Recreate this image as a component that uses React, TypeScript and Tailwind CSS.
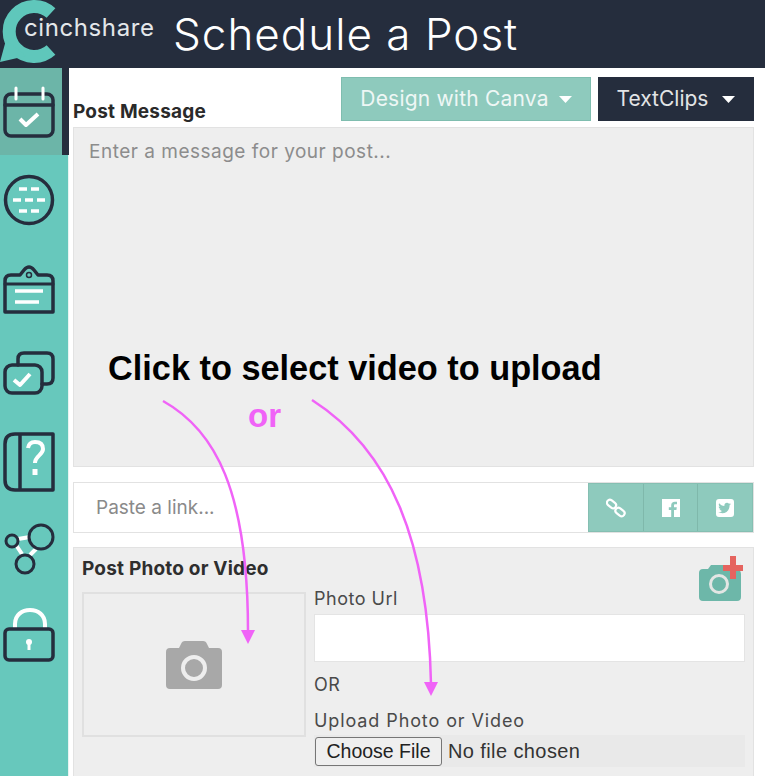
import React from 'react';

const DARK = '#252d3d';

const Caret = () => (
  <svg width="13" height="7" viewBox="0 0 13 7" className="shrink-0">
    <path d="M0 0h13L6.500 7z" fill="#fff" />
  </svg>
);

const Logo = () => (
  <div className="relative w-[167px] h-[68px] shrink-0">
    <svg width="60" height="64" viewBox="0 0 60 64" className="absolute left-0 top-0">
      <path d="M51 13A25 25 0 1 0 51 50" fill="none" stroke="#5fc7bb" strokeWidth="13" />
      <path d="M6 40L0 62l26-6z" fill="#5fc7bb" />
    </svg>
    <span className="absolute left-[24px] top-[13px] text-[24px] leading-[30px] tracking-[0.6px] text-[#e4e7ea] font-['Inter',sans-serif]">
      cinchshare
    </span>
  </div>
);

const icon = { fill: 'none', stroke: DARK, strokeWidth: 3, strokeLinecap: 'round' as const, strokeLinejoin: 'round' as const };
const white = { fill: 'none', stroke: '#fff', strokeWidth: 3, strokeLinecap: 'round' as const, strokeLinejoin: 'round' as const };

const CalendarIcon = () => (
  <svg width="52" height="52" viewBox="0 0 52 52">
    <rect x="2" y="8" width="48" height="42" rx="6" {...icon} strokeWidth={3.500} />
    <path d="M2 19h48" {...icon} strokeWidth={3.500} />
    <path d="M13 2v11M40 2v11" {...white} />
    <path d="M17 33l6 6 12-11" {...white} strokeWidth={4} strokeLinecap="butt" />
  </svg>
);

const ChatIcon = () => (
  <svg width="52" height="52" viewBox="0 0 52 52">
    <circle cx="26" cy="26" r="23.500" {...icon} strokeWidth={3.500} />
    <path d="M16 15h8M28 15h8M10 26h8M22 26h8M34 26h8M16 37h8M28 37h8" {...white} strokeLinecap="butt" strokeWidth={3.500} />
  </svg>
);

const ClipIcon = () => (
  <svg width="52" height="52" viewBox="0 2 52 52">
    <path d="M2 52V21q0-6 6-6h9l4-5q5-6 10 0l4 5h9q6 0 6 6v31z" {...icon} strokeWidth={3.500} />
    <path d="M2 24h48" {...icon} strokeWidth={3} />
    <circle cx="26" cy="15" r="2.500" {...icon} strokeWidth={1.500} />
    <path d="M12 31h28M12 42h24" {...white} strokeLinecap="butt" strokeWidth={3.500} />
  </svg>
);

const CopyIcon = () => (
  <svg width="52" height="44" viewBox="0 0 52 44">
    <path d="M15 14V8q0-6 6-6h23q6 0 6 6v19q0 6-6 6h-5" {...icon} strokeWidth={3.500} />
    <rect x="2" y="14" width="37" height="28" rx="7" {...icon} strokeWidth={3.500} />
    <path d="M11 29l6 5 10-11" {...white} strokeWidth={4} strokeLinecap="butt" />
  </svg>
);

const BookIcon = () => (
  <svg width="52" height="60" viewBox="0 0 52 60">
    <path d="M50 2H12Q2 2 2 12v36q0 10 10 10h38zM17 2v56" {...icon} strokeLinecap="butt" strokeWidth={3.500} />
    <path d="M25 16q1-6 7-6 8 0 8 7c0 6-8 7-8 14" {...white} strokeWidth={4} strokeLinecap="butt" />
    <path d="M32 37v6" {...white} strokeWidth={5} strokeLinecap="butt" />
  </svg>
);

const NodesIcon = () => (
  <svg width="52" height="52" viewBox="0 0 52 52">
    <path d="M15 16l12-2M13 22l6 9M33 26l-6 6" {...white} strokeWidth={4} strokeLinecap="butt" />
    <circle cx="9" cy="18" r="6" {...icon} />
    <circle cx="38" cy="14" r="12" {...icon} />
    <circle cx="22" cy="41" r="9" {...icon} />
  </svg>
);

const LockIcon = () => (
  <svg width="52" height="54" viewBox="0 0 52 54">
    <path d="M12 22V16C12 7 19 2 27 2s15 5 15 14v6" {...white} strokeWidth={4} strokeLinecap="butt" />
    <rect x="2" y="21" width="48" height="31" rx="4" {...icon} strokeWidth={3.500} />
    <path d="M26 35v7" {...white} strokeLinecap="butt" strokeWidth={3} />
    <circle cx="26" cy="34" r="3" fill="#fff" />
  </svg>
);

const LinkIcon = () => (
  <svg width="20" height="20" viewBox="0 0 20 20" fill="none" stroke="#fff" strokeWidth="2.200">
    <rect x="0.500" y="3" width="10" height="6" rx="3" transform="rotate(38 5.500 6)" />
    <rect x="9" y="11" width="10" height="6" rx="3" transform="rotate(38 14 14)" />
  </svg>
);

const FacebookIcon = () => (
  <svg width="18" height="18" viewBox="0 0 18 18">
    <path d="M0 0h18v18h-6v-7h2.400l.4-2.700H12V6.500c0-.8.300-1.300 1.400-1.300H15V2.800c-.4 0-1.200-.1-2.200-.1-2.200 0-3.600 1.300-3.600 3.600v2H6.800V11h2.400v7H0z" fill="#fff" />
  </svg>
);

const TwitterIcon = () => (
  <svg width="18" height="18" viewBox="0 0 18 18">
    <path
      fillRule="evenodd"
      d="M3 0h12a3 3 0 013 3v12a3 3 0 01-3 3H3a3 3 0 01-3-3V3a3 3 0 013-3zm12 5c-.5.200-1 .400-1.500.400.500-.300 1-.800 1.200-1.400-.5.300-1 .500-1.700.700a2.600 2.600 0 00-4.500 2.400c-2.200-.1-4.100-1.200-5.400-2.800-.7 1.200-.3 2.700.8 3.500-.4 0-.8-.1-1.200-.3 0 1.300.9 2.400 2.100 2.600-.4.100-.8.100-1.200 0 .3 1 1.300 1.800 2.500 1.800-1.200.9-2.600 1.300-3.900 1.200 4.800 2.900 11.500.2 11.400-6.900.5-.4 1-.8 1.400-1.300z"
      fill="#fff"
    />
  </svg>
);

const CameraPlus = () => (
  <svg width="46" height="46" viewBox="0 0 46 46" className="mr-[2px] mt-[-1px]">
    <path d="M2 18q0-4 4-4h5l3-4h14q2 0 3 2l2 2h5q6 0 6 5v23q0 4-4 4H6q-4 0-4-4z" fill="#6db7a9" />
    <circle cx="22" cy="29" r="8.500" fill="none" stroke="#e3e6e4" strokeWidth="3" />
    <path d="M26 10h7V1h6v9h7v6h-7v8h-6v-8h-7z" fill="#e5645f" />
  </svg>
);

const CameraGrey = () => (
  <svg width="56" height="48" viewBox="0 0 56 48">
    <path d="M0 11q0-4 4-4h9l2-4q1-3 4-3h18q3 0 4 3l2 4h9q4 0 4 4v33q0 4-4 4H4q-4 0-4-4z" fill="#a8a8a8" />
    <circle cx="28" cy="27" r="11" fill="#a8a8a8" stroke="#eee" strokeWidth="4" />
  </svg>
);

const NAV = [ChatIcon, ClipIcon, CopyIcon, BookIcon, NodesIcon, LockIcon];
const NAV_HEIGHTS = ['h-[90px]', 'h-[86px]', 'h-[84px]', 'h-[94px]', 'h-[80px]', 'h-[92px]'];

export default function App() {
  return (
    <div className="relative w-[768px] h-[776px] overflow-hidden bg-white font-['Inter',sans-serif] text-[#333]">
      <header className="h-[68px] bg-[#252d3d] flex items-center w-[765px]">
        <Logo />
        <h1 className="ml-[6px] text-[44px] leading-[50px] tracking-[1px] text-white font-light">
          Schedule a Post
        </h1>
      </header>

      <div className="flex h-[708px] w-[765px]">
        <nav className="w-[69px] shrink-0 bg-[#67c8bc] border-r border-[#e8f3f1]">
          <div className="h-[87px] flex items-center pl-[3px] bg-[#6cb5a8] border-r-[7px] border-[#252d3d] mr-[-1px]">
            <CalendarIcon />
          </div>
          {NAV.map((Icon, i) => (
            <div key={i} className={`${NAV_HEIGHTS[i]} flex items-center pl-[3px]`}>
              <Icon />
            </div>
          ))}
        </nav>

        <main className="flex-1 pl-[4px] pr-[11px]">
          <div className="h-[59px] flex items-start pt-[9px] gap-[7px]">
            <span className="mt-[23px] mr-auto text-[19px] leading-[24px] font-bold text-[#2a2a2a] tracking-[0.2px]">
              Post Message
            </span>
            <button className="w-[250px] h-[44px] flex items-center justify-center gap-[10px] bg-[#8ecabd] border border-[#7fbdaf] text-[#eef7f5] text-[21px] tracking-[0.2px]">
              Design with Canva <Caret />
            </button>
            <button className="w-[156px] h-[44px] flex items-center justify-center gap-[14px] bg-[#252d3d] text-[#e2e4e6] text-[21px]">
              TextClips <Caret />
            </button>
          </div>

          <div className="h-[340px] bg-[#eeeeee] border border-[#e2e2e2] px-[15px] pt-[11px] text-[19px] leading-[26px] tracking-[0.5px] text-[#8c8c8c]">
            Enter a message for your post...
          </div>

          <div className="mt-[15px] h-[51px] flex border border-[#e2e2e2] bg-white">
            <div className="flex-1 flex items-center pl-[22px] text-[19px] text-[#8a8a8a] pt-[1px]">Paste a link...</div>
            <div className="flex w-[165px] bg-[#8ecabd] border border-[#85bfb2]">
              <div className="flex-1 flex items-center justify-center border-r border-[#7fb8ab]">
                <LinkIcon />
              </div>
              <div className="flex-1 flex items-center justify-center border-r border-[#7fb8ab]">
                <FacebookIcon />
              </div>
              <div className="flex-1 flex items-center justify-center">
                <TwitterIcon />
              </div>
            </div>
          </div>

          <section className="mt-[14px] h-[240px] bg-[#eeeeee] border border-[#e2e2e2] pl-[8px] pr-[8px] pt-[8px]">
            <div className="flex justify-between h-[36px]">
              <span className="mt-[1px] text-[19px] leading-[24px] font-bold text-[#2e2e2e] tracking-[0.2px]">Post Photo or Video</span>
              <CameraPlus />
            </div>
            <div className="flex gap-[8px]">
              <div className="w-[224px] h-[145px] shrink-0 flex items-center justify-center border-2 border-[#e0e0e0]">
                <CameraGrey />
              </div>
              <div className="flex-1 text-[18px] text-[#4a4a4a] tracking-[0.5px]">
                <div className="h-[22px] leading-[14px]">Photo Url</div>
                <div className="h-[48px] bg-white border border-[#e4e4e4]" />
                <div className="mt-[13px] h-[24px] leading-[20px]">OR</div>
                <div className="mt-[12px] h-[24px] leading-[20px] tracking-[0.9px]">Upload Photo or Video</div>
                <div className="h-[32px] flex items-center bg-[#e9e9e9] pl-[1px] tracking-normal">
                  <button className="w-[127px] h-[29px] bg-[#efefef] border border-[#767676] rounded-[3px] text-[19.500px] leading-[24px] text-[#222] font-['Liberation_Sans',sans-serif]">
                    Choose File
                  </button>
                  <span className="ml-[6px] text-[20px] tracking-[0.4px] text-[#333] font-['Liberation_Sans',sans-serif]">No file chosen</span>
                </div>
              </div>
            </div>
          </section>
        </main>
      </div>

      <div className="absolute left-[108px] top-[348px] text-[34.300px] leading-[40px] font-bold text-black whitespace-nowrap font-['Liberation_Sans',sans-serif]">
        Click to select video to upload
      </div>
      <div className="absolute left-[248px] top-[396px] text-[33px] leading-[40px] font-bold text-[#f063f7] font-['Liberation_Sans',sans-serif]">
        or
      </div>
      <svg width="768" height="776" viewBox="0 0 768 776" className="absolute left-0 top-0 pointer-events-none">
        <path d="M163 401C215 430 248 490 248 632" fill="none" stroke="#f063f7" strokeWidth="2.500" />
        <path d="M241 630h14l-7 14z" fill="#f063f7" />
        <path d="M312 400C390 450 428 540 431 684" fill="none" stroke="#f063f7" strokeWidth="2.500" />
        <path d="M424 682h14l-7 14z" fill="#f063f7" />
      </svg>
    </div>
  );
}
